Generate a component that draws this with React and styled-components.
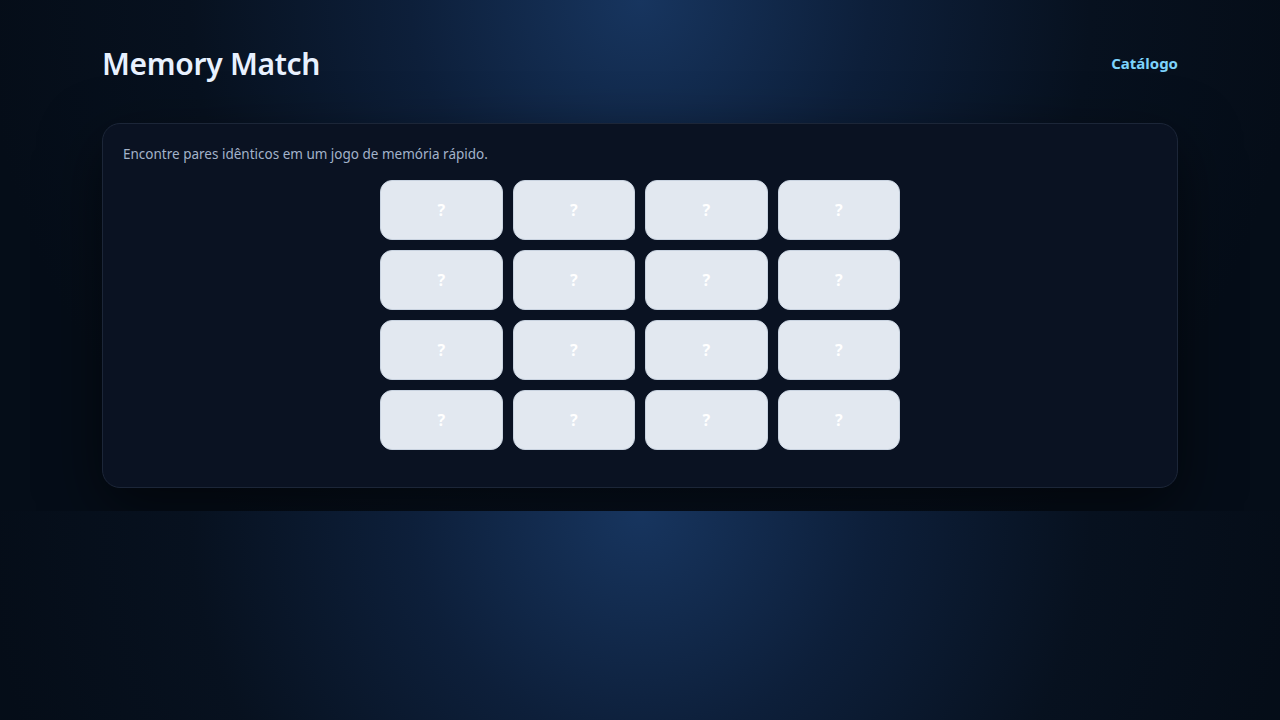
import React from "react";
import styled, { createGlobalStyle } from "styled-components";

const GlobalStyle = createGlobalStyle`
  * { box-sizing: border-box; }
  body {
    margin: 0;
    font-family: "Noto Sans", "DejaVu Sans", sans-serif;
    color: #e6eefc;
    background: radial-gradient(circle at 50% 0%, #17355f 0%, #0d1f3a 28%, #07111f 55%, #050d18 80%);
  }
`;

const Page = styled.div`
  max-width: 1120px;
  margin: 0 auto;
  padding: 40px 22px 23px;
`;

const Header = styled.header`
  display: flex;
  align-items: center;
  justify-content: space-between;
  height: 46px;
  margin-bottom: 37px;
`;

const Title = styled.h1`
  margin: 0;
  font-size: 30px;
  font-weight: 600;
  letter-spacing: -0.3px;
  color: #e8f1ff;
`;

const NavLink = styled.a`
  font-size: 15px;
  font-weight: 700;
  color: #7dd3fc;
  text-decoration: none;
  &:hover {
    opacity: 0.9;
  }
`;

const Panel = styled.section`
  background: #0a1222;
  border: 1px solid #1c2638;
  border-radius: 18px;
  padding: 20px;
  box-shadow: 0 20px 60px rgba(0, 0, 0, 0.55);
`;

const Description = styled.p`
  margin: 0 0 16px;
  font-size: 13.5px;
  line-height: 20px;
  color: #a3b3ca;
`;

const Board = styled.div`
  display: grid;
  grid-template-columns: repeat(4, 1fr);
  grid-auto-rows: 60px;
  gap: 10px;
  max-width: 520px;
  margin: 0 auto 17px;
`;

const Card = styled.button`
  display: flex;
  align-items: center;
  justify-content: center;
  border: 1px solid #c9d3e0;
  border-radius: 12px;
  background: ${(p) => (p.$flipped ? "#1e293b" : "#e2e8f0")};
  color: #ffffff;
  font-family: inherit;
  font-size: 16px;
  font-weight: 700;
  cursor: pointer;
  padding: 0;
`;

const cards = Array.from({ length: 16 }, (_, i) => i);

export default function App() {
  return (
    <>
      <GlobalStyle />
      <Page>
        <Header>
          <Title>Memory Match</Title>
          <NavLink href="#">Catálogo</NavLink>
        </Header>
        <Panel>
          <Description>Encontre pares idênticos em um jogo de memória rápido.</Description>
          <Board>
            {cards.map((id) => (
              <Card key={id}>?</Card>
            ))}
          </Board>
        </Panel>
      </Page>
    </>
  );
}
